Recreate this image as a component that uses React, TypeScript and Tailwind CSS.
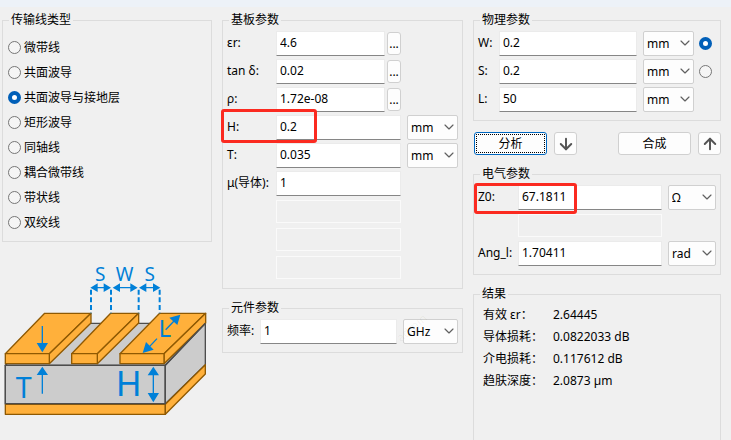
import { useState, type ReactNode } from "react"
import { ArrowDown, ArrowUp, ChevronDown } from "lucide-react"

const lineTypes = ["微带线", "共面波导", "共面波导与接地层", "矩形波导", "同轴线", "耦合微带线", "带状线", "双绞线"]

const results = [
  ["有效 εr：", "2.64445"],
  ["导体损耗：", "0.0822033 dB"],
  ["介电损耗：", "0.117612 dB"],
  ["趋肤深度：", "2.0873 µm"],
]

const radioClass =
  "size-[13px] shrink-0 appearance-none rounded-full border border-[#767676] bg-[#f5f5f5] checked:border-4 checked:border-[#005fb8] checked:bg-white"

function Group({ title, className = "pb-2", children }: { title: string; className?: string; children: ReactNode }) {
  return (
    <fieldset className={`min-w-0 border border-[#dcdcdc] px-1 ${className}`}>
      <legend className="ml-0.5 px-0.5 leading-4">{title}</legend>
      {children}
    </fieldset>
  )
}

function Field({ id, value, disabled }: { id: string; value?: string; disabled?: boolean }) {
  if (disabled) {
    return (
      <input
        id={id}
        disabled
        aria-label="未使用"
        className="my-px h-[23px] w-full min-w-0 flex-1 border border-[#fafafa] bg-[#efefef] px-1"
      />
    )
  }
  return (
    <input
      id={id}
      defaultValue={value}
      className="h-[25px] w-full min-w-0 flex-1 border border-[#ebebeb] border-b-[#868686] bg-white px-[3px] pb-0.5 outline-none"
    />
  )
}

function Unit({ label, options, className = "w-[51px]" }: { label: string; options: string[]; className?: string }) {
  return (
    <div className={`relative ml-1.5 h-[25px] shrink-0 ${className}`}>
      <select
        aria-label={label}
        className="size-full appearance-none rounded-[2px] border border-[#d0d0d0] bg-[#fdfdfd] pl-[3px] outline-none"
      >
        {options.map((o) => (
          <option key={o}>{o}</option>
        ))}
      </select>
      <ChevronDown className="pointer-events-none absolute top-1 right-px size-4 text-[#606060]" strokeWidth={1.75} />
    </div>
  )
}

function Row({
  id,
  label,
  labelWidth,
  children,
}: {
  id: string
  label?: string
  labelWidth: string
  children: ReactNode
}) {
  return (
    <div className="relative flex h-[25px] items-center">
      <label htmlFor={id} className={`shrink-0 pb-0.5 whitespace-nowrap ${labelWidth}`}>
        {label}
      </label>
      {children}
    </div>
  )
}

function MoreButton({ label }: { label: string }) {
  return (
    <button
      aria-label={label}
      className="ml-0.5 h-[23px] w-[14px] shrink-0 rounded-[3px] border border-[#d0d0d0] bg-[#fdfdfd] text-center leading-5"
    >
      ...
    </button>
  )
}

function Diagram() {
  return (
    <svg viewBox="6 9 630 489" className="w-full" role="img" aria-label="共面波导与接地层">
      {/* substrate and ground plane */}
      <g stroke="#4d4d4d" strokeWidth="4" strokeLinejoin="round" fill="#cccccc">
        <path d="M16 343 L142 217 H616 L496 343 Z" />
        <path d="M16 343 H496 V458 H16 Z" />
        <path d="M496 343 L616 217 V341 L496 458 Z" />
      </g>
      <g stroke="#8f5902" strokeWidth="4" strokeLinejoin="round" fill="#ffb03b">
        <path d="M16 460 H496 V490 H16 Z" />
        <path d="M496 460 L616 341 V369 L496 490 Z" />
        {/* traces */}
        <path d="M16 308 L134 187 H273 L148 308 Z" />
        <path d="M148 308 L273 187 V216 L148 338 Z" />
        <path d="M16 308 H148 V338 H16 Z" />
        <path d="M215 308 L332 187 H416 L292 308 Z" />
        <path d="M292 308 L416 187 V216 L292 338 Z" />
        <path d="M215 308 H292 V338 H215 Z" />
        <path d="M360 308 L479 187 H617 L492 308 Z" />
        <path d="M492 308 L617 187 V216 L492 338 Z" />
        <path d="M360 308 H492 V338 H360 Z" />
      </g>
      <path d="M16 343 H496 V458 H16 Z M496 343 L616 217" fill="none" stroke="#4d4d4d" strokeWidth="4" />
      {/* dimensions */}
      <g stroke="#0080d8" strokeWidth="4" fill="none">
        <path d="M273 116 V187 M333 116 V187 M416 116 V187 M479 116 V187" strokeWidth="6" strokeDasharray="15 8" />
        <path d="M285 110 H322 M350 110 H402 M430 110 H468 M127 225 V285 M127 428 V365 M460 365 V435 M440 296 L471 263 M497 236 L530 202" />
      </g>
      <g fill="#0080d8">
        <path d="M271 110 l22 -13 v26 Z M333 110 l-22 -13 v26 Z M338 110 l22 -13 v26 Z M413 110 l-22 -13 v26 Z M417 110 l22 -13 v26 Z M481 110 l-22 -13 v26 Z" />
        <path d="M127 304 l-17 -28 h34 Z M127 347 l-17 25 h34 Z M460 347 l-17 26 h34 Z M460 454 l-17 -28 h34 Z" />
        <path d="M541 191 l-33 9 l24 22 Z M428 306 l10 -33 l23 23 Z" />
      </g>
      <g fill="#0080d8" className="font-['Noto_Sans',sans-serif]" textAnchor="middle">
        <text x="301" y="89" fontSize="57">S</text>
        <text x="374" y="89" fontSize="57">W</text>
        <text x="449" y="89" fontSize="57">S</text>
        <text x="494" y="259" fontSize="72">L</text>
        <text x="71" y="440" fontSize="86">T</text>
        <text x="386" y="434" fontSize="105">H</text>
      </g>
    </svg>
  )
}

const lengthUnits = ["mm", "µm", "cm", "mil", "in"]

export default function App() {
  const [lineType, setLineType] = useState(2)
  const mid = "w-[49px]"

  return (
    <div className="flex min-h-screen flex-col bg-[#f0f0f0] font-['Noto_Sans','Noto_Sans_CJK_SC',sans-serif] text-xs leading-4 text-black">
      <div className="h-[7px] bg-[#edf2f8]" />
      <main className="grid flex-1 grid-cols-[minmax(0,210fr)_minmax(0,241fr)_minmax(0,248fr)] gap-x-2.5 pt-[5px] pr-2.5 pl-0.5">
        {/* Line type */}
        <div className="flex flex-col gap-3">
          <Group title="传输线类型" className="pb-1.5">
            <div className="px-px pt-[7px]">
              {lineTypes.map((name, i) => (
                <label key={name} className="flex h-[25px] items-center gap-[3px]">
                  <input
                    type="radio"
                    name="line-type"
                    checked={i === lineType}
                    onChange={() => setLineType(i)}
                    className={radioClass}
                  />
                  {name}
                </label>
              ))}
            </div>
          </Group>
          <Diagram />
        </div>

        {/* Substrate and component */}
        <div className="flex flex-col gap-[11px]">
          <Group title="基板参数">
            <div className="flex flex-col gap-[3px] pt-[3px]">
              <Row id="er" label="εr:" labelWidth={mid}>
                <Field id="er" value="4.6" />
                <MoreButton label="选择 εr" />
                <div className="w-[57px] shrink-0" />
              </Row>
              <Row id="tand" label="tan δ:" labelWidth={mid}>
                <Field id="tand" value="0.02" />
                <MoreButton label="选择 tan δ" />
                <div className="w-[57px] shrink-0" />
              </Row>
              <Row id="rho" label="ρ:" labelWidth={mid}>
                <Field id="rho" value="1.72e-08" />
                <MoreButton label="选择 ρ" />
                <div className="w-[57px] shrink-0" />
              </Row>
              <Row id="h" label="H:" labelWidth={mid}>
                <Field id="h" value="0.2" />
                <Unit label="H 单位" options={lengthUnits} />
                <div className="pointer-events-none absolute -top-1.5 -left-1.5 h-[34px] w-24 rounded-[3px] border-3 border-[#fb2a20]" />
              </Row>
              <Row id="t" label="T:" labelWidth={mid}>
                <Field id="t" value="0.035" />
                <Unit label="T 单位" options={lengthUnits} />
              </Row>
              <Row id="mu" label="μ(导体):" labelWidth={mid}>
                <Field id="mu" value="1" />
                <div className="w-[57px] shrink-0" />
              </Row>
              {["x1", "x2", "x3"].map((id) => (
                <Row key={id} id={id} labelWidth={mid}>
                  <Field id={id} disabled />
                  <div className="w-[57px] shrink-0" />
                </Row>
              ))}
            </div>
          </Group>
          <Group title="元件参数">
            <div className="relative pt-[3px]">
              <Row id="freq" label="频率:" labelWidth="w-[33px]">
                <Field id="freq" value="1" />
                <Unit label="频率单位" options={["GHz", "MHz", "kHz"]} className="w-[55px]" />
              </Row>
              <span className="pointer-events-none absolute right-7 bottom-2 -rotate-40 text-black/5">admin</span>
            </div>
          </Group>
        </div>

        {/* Physical, electrical and results */}
        <div className="flex flex-col gap-[11px]">
          <Group title="物理参数">
            <div className="flex flex-col gap-[3px] pt-[3px]">
              <Row id="w" label="W:" labelWidth="w-[21px]">
                <Field id="w" value="0.2" />
                <Unit label="W 单位" options={lengthUnits} />
                <div className="flex w-[22px] shrink-0 pl-[5px]">
                  <input type="radio" name="solve" aria-label="求解 W" defaultChecked className={radioClass} />
                </div>
              </Row>
              <Row id="s" label="S:" labelWidth="w-[21px]">
                <Field id="s" value="0.2" />
                <Unit label="S 单位" options={lengthUnits} />
                <div className="flex w-[22px] shrink-0 pl-[5px]">
                  <input type="radio" name="solve" aria-label="求解 S" className={radioClass} />
                </div>
              </Row>
              <Row id="l" label="L:" labelWidth="w-[21px]">
                <Field id="l" value="50" />
                <Unit label="L 单位" options={lengthUnits} />
                <div className="w-[22px] shrink-0" />
              </Row>
            </div>
          </Group>

          <div className="flex justify-between pl-px">
            <div className="flex gap-[7px]">
              <button className="h-[23px] w-[73px] rounded-[3px] border border-[#0067c0] bg-[#fdfdfd] p-px">
                <span className="flex size-full items-center justify-center border border-dotted border-black">分析</span>
              </button>
              <button
                aria-label="向下"
                className="flex h-[23px] w-[23px] items-center justify-center rounded-[3px] border border-[#d0d0d0] bg-[#fdfdfd] text-[#545454]"
              >
                <ArrowDown className="size-[18px] shrink-0" strokeWidth={2.6} />
              </button>
            </div>
            <div className="flex gap-[7px]">
              <button className="h-[23px] w-[73px] rounded-[3px] border border-[#d0d0d0] bg-[#fdfdfd]">合成</button>
              <button
                aria-label="向上"
                className="flex h-[23px] w-[23px] items-center justify-center rounded-[3px] border border-[#d0d0d0] bg-[#fdfdfd] text-[#545454]"
              >
                <ArrowUp className="size-[18px] shrink-0" strokeWidth={2.6} />
              </button>
            </div>
          </div>

          <Group title="电气参数">
            <div className="flex flex-col gap-[3px] pt-[3px]">
              <Row id="z0" label="Z0:" labelWidth="w-10">
                <Field id="z0" value="67.1811" />
                <Unit label="Z0 单位" options={["Ω", "kΩ"]} className="w-12" />
                <div className="pointer-events-none absolute -top-0.5 -left-1 h-[31px] w-[103px] rounded-[3px] border-3 border-[#fb2a20]" />
              </Row>
              <Row id="x4" labelWidth="w-10">
                <Field id="x4" disabled />
                <div className="w-[54px] shrink-0" />
              </Row>
              <Row id="ang" label="Ang_l:" labelWidth="w-10">
                <Field id="ang" value="1.70411" />
                <Unit label="Ang_l 单位" options={["rad", "deg"]} className="w-12" />
              </Row>
            </div>
          </Group>

          <Group title="结果" className="flex-1 border-b-0 pt-0.5">
            <table className="ml-[5px]">
              <tbody>
                {results.map(([name, value]) => (
                  <tr key={name} className="h-[22px]">
                    <th scope="row" className="w-[70px] text-left font-normal whitespace-nowrap">
                      {name}
                    </th>
                    <td className="whitespace-nowrap">{value}</td>
                  </tr>
                ))}
              </tbody>
            </table>
          </Group>
        </div>
      </main>
    </div>
  )
}
